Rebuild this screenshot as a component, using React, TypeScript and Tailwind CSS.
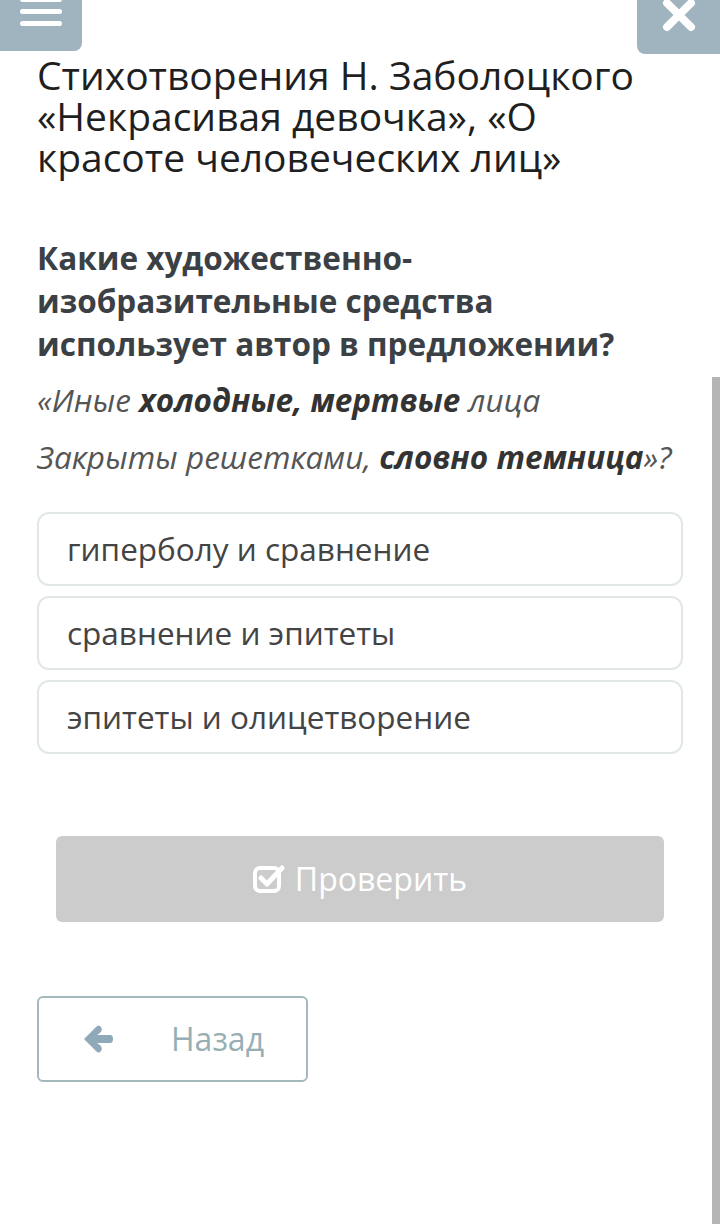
import React from 'react'

const options = ['гиперболу и сравнение', 'сравнение и эпитеты', 'эпитеты и олицетворение']

function CheckSquare() {
  return (
    <svg width="32" height="30" viewBox="0 0 32 30" fill="none">
      <rect x="2" y="4" width="24" height="23" rx="5" stroke="white" strokeWidth="4" />
      <path d="M8 14 L14 20 L29 4" stroke="white" strokeWidth="5" strokeLinecap="round" strokeLinejoin="round" />
    </svg>
  )
}

function ArrowLeft() {
  return (
    <svg width="32" height="28" viewBox="0 0 32 28" fill="#8fa9b8">
      <path d="M2 14 L14 2 Q17 -1 19 2 Q21 5 18 8 L15 10 H28 Q31 10 31 14 Q31 18 28 18 H15 L18 20 Q21 23 19 26 Q17 29 14 26 Z" />
    </svg>
  )
}

export default function App() {
  return (
    <div className="relative w-[720px] h-[1224px] bg-white overflow-hidden font-['Open_Sans',sans-serif]">
      <div className="flex justify-between h-[54px]">
        <div className="w-[82px] h-[54px] bg-[#a0b4c0] rounded-br-lg flex flex-col items-center gap-[7px] -mt-[3px]">
          <span className="w-[42px] h-[5px] bg-white rounded-sm" />
          <span className="w-[42px] h-[5px] bg-white rounded-sm" />
          <span className="w-[42px] h-[5px] bg-white rounded-sm" />
        </div>
        <div className="w-[83px] h-[54px] bg-[#a0b4c0] rounded-bl-lg flex justify-center">
          <svg width="36" height="36" viewBox="0 0 36 36" className="-mt-[3px]">
            <path d="M6 6 L30 30 M30 6 L6 30" stroke="white" strokeWidth="8" strokeLinecap="round" />
          </svg>
        </div>
      </div>

      <div className="px-[37px]">
        <h1 className="text-[39px] leading-[41px] text-[#1f1f1f]">
          Стихотворения Н. Заболоцкого «Некрасивая девочка», «О красоте человеческих лиц»
        </h1>

        <h2 className="mt-[59px] text-[31.5px] leading-[43px] font-bold text-[#3b4045]">
          Какие художественно-изобразительные средства использует автор в предложении?
        </h2>

        <div className="mt-[15px] text-[31.5px] italic text-[#555] leading-[40px]">
          <p>«Иные <b className="text-[#333]">холодные, мертвые</b> лица</p>
          <p className="mt-[17px]">Закрыты решетками, <b className="text-[#333]">словно темница</b>»?</p>
        </div>

        <div className="mt-[35px] flex flex-col gap-[10px]">
          {options.map((o) => (
            <div key={o} className="h-[74px] border-2 border-[#e1e7e7] rounded-xl flex items-center px-[28px] text-[31.5px] text-[#444]">
              {o}
            </div>
          ))}
        </div>

        <div className="px-[19px] mt-[82px]">
          <button className="w-full h-[86px] bg-[#cccccc] rounded-md flex items-center justify-center gap-[10px] text-white text-[32px]">
            <CheckSquare />
            Проверить
          </button>
        </div>

        <button className="mt-[74px] w-[271px] h-[86px] border-2 border-[#a3b9bc] rounded-md flex items-center pl-[43px] gap-[57px] text-[32px] text-[#97aeb5]">
          <ArrowLeft />
          Назад
        </button>
      </div>

      <div className="absolute right-0 top-[377px] bottom-0 w-[8px] bg-[#b5b5b5]" />
    </div>
  )
}
